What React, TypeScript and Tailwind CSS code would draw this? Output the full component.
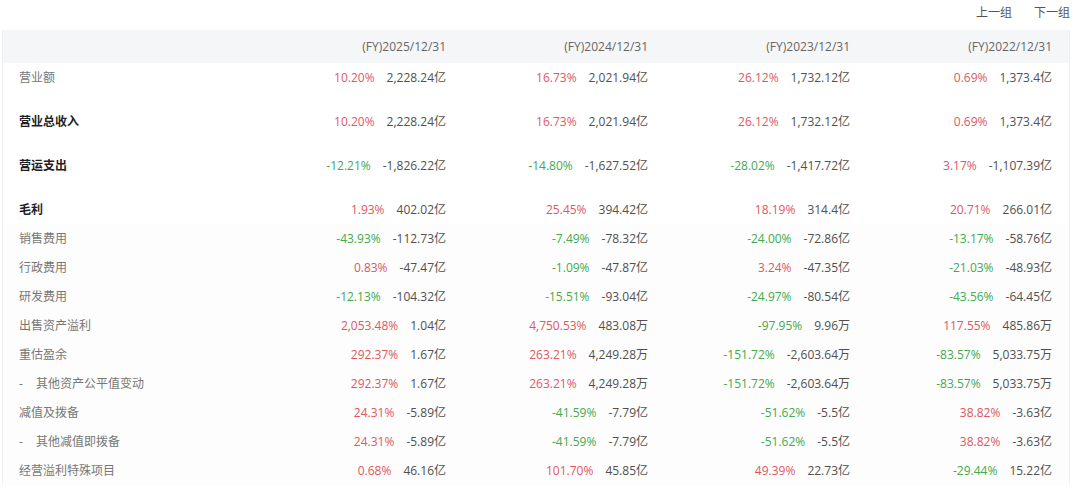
import React from "react";

type Cell = [string, string];

interface Row {
  label: string;
  bold?: boolean;
  sub?: boolean;
  tall?: boolean;
  cells: Cell[];
}

const headers = ["(FY)2025/12/31", "(FY)2024/12/31", "(FY)2023/12/31", "(FY)2022/12/31"];

const rows: Row[] = [
  { label: "营业额", tall: true, cells: [["10.20%", "2,228.24亿"], ["16.73%", "2,021.94亿"], ["26.12%", "1,732.12亿"], ["0.69%", "1,373.4亿"]] },
  { label: "营业总收入", bold: true, tall: true, cells: [["10.20%", "2,228.24亿"], ["16.73%", "2,021.94亿"], ["26.12%", "1,732.12亿"], ["0.69%", "1,373.4亿"]] },
  { label: "营运支出", bold: true, tall: true, cells: [["-12.21%", "-1,826.22亿"], ["-14.80%", "-1,627.52亿"], ["-28.02%", "-1,417.72亿"], ["3.17%", "-1,107.39亿"]] },
  { label: "毛利", bold: true, cells: [["1.93%", "402.02亿"], ["25.45%", "394.42亿"], ["18.19%", "314.4亿"], ["20.71%", "266.01亿"]] },
  { label: "销售费用", cells: [["-43.93%", "-112.73亿"], ["-7.49%", "-78.32亿"], ["-24.00%", "-72.86亿"], ["-13.17%", "-58.76亿"]] },
  { label: "行政费用", cells: [["0.83%", "-47.47亿"], ["-1.09%", "-47.87亿"], ["3.24%", "-47.35亿"], ["-21.03%", "-48.93亿"]] },
  { label: "研发费用", cells: [["-12.13%", "-104.32亿"], ["-15.51%", "-93.04亿"], ["-24.97%", "-80.54亿"], ["-43.56%", "-64.45亿"]] },
  { label: "出售资产溢利", cells: [["2,053.48%", "1.04亿"], ["4,750.53%", "483.08万"], ["-97.95%", "9.96万"], ["117.55%", "485.86万"]] },
  { label: "重估盈余", cells: [["292.37%", "1.67亿"], ["263.21%", "4,249.28万"], ["-151.72%", "-2,603.64万"], ["-83.57%", "5,033.75万"]] },
  { label: "其他资产公平值变动", sub: true, cells: [["292.37%", "1.67亿"], ["263.21%", "4,249.28万"], ["-151.72%", "-2,603.64万"], ["-83.57%", "5,033.75万"]] },
  { label: "减值及拨备", cells: [["24.31%", "-5.89亿"], ["-41.59%", "-7.79亿"], ["-51.62%", "-5.5亿"], ["38.82%", "-3.63亿"]] },
  { label: "其他减值即拨备", sub: true, cells: [["24.31%", "-5.89亿"], ["-41.59%", "-7.79亿"], ["-51.62%", "-5.5亿"], ["38.82%", "-3.63亿"]] },
  { label: "经营溢利特殊项目", cells: [["0.68%", "46.16亿"], ["101.70%", "45.85亿"], ["49.39%", "22.73亿"], ["-29.44%", "15.22亿"]] },
];

const ValueCell = ({ cell }: { cell: Cell }) => {
  const down = cell[0].startsWith("-");
  return (
    <div className="w-[202px] flex justify-end items-center pr-[17px] whitespace-nowrap">
      <span className={down ? "text-[#45a94e]" : "text-[#e0575f]"}>{cell[0]}</span>
      <span className="ml-[12px] text-[#505050]">{cell[1]}</span>
    </div>
  );
};

export default function App() {
  return (
    <div className="w-[1080px] h-[488px] bg-white overflow-hidden text-[12px] leading-4" style={{ fontFamily: '"Open Sans", "Noto Sans CJK SC", sans-serif' }}>
      <div className="h-[30px] flex justify-end items-start pt-[5px] pr-[10px] gap-[22px] text-[#555]">
        <span>上一组</span>
        <span>下一组</span>
      </div>
      <div className="ml-[2px] w-[1068px] border-l border-r border-[#efefef]">
        <div className="h-[33px] flex items-center bg-[#f5f6f8] text-[#666]">
          <div className="w-[258px]" />
          {headers.map((h) => (
            <div key={h} className="w-[202px] text-right pr-[17px]">{h}</div>
          ))}
        </div>
        {rows.map((row, i) => (
          <div key={i} className={`${row.tall ? "h-[44px]" : "h-[29px]"} ${i >= 4 ? "bg-[#fcfdfc]" : ""}`}>
            <div className="h-[29px] flex items-center">
              <div className={`w-[258px] pl-4 ${row.bold ? "font-bold text-[#1f1f1f]" : "text-[#777]"}`}>
                {row.sub ? (
                  <span>
                    <span className="mr-[13px]">-</span>
                    {row.label}
                  </span>
                ) : (
                  row.label
                )}
              </div>
              {row.cells.map((c, j) => (
                <ValueCell key={j} cell={c} />
              ))}
            </div>
          </div>
        ))}
      </div>
    </div>
  );
}
